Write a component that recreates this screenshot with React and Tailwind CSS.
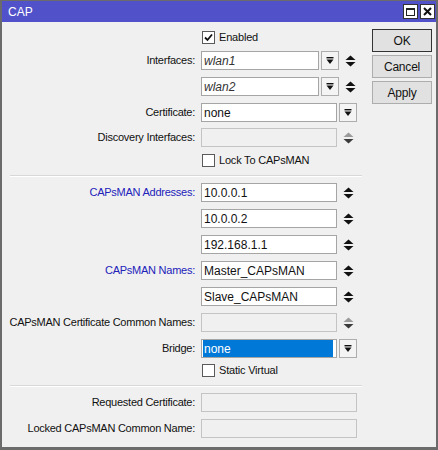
import React from "react";

const font = { fontFamily: '"Liberation Sans", Arial, sans-serif' };

const DropBtn = () => (
  <div className="w-[18px] h-[19px] ml-[2px] border border-[#adadad] bg-[#f4f4f4] flex items-center justify-center">
    <svg width="8" height="8" viewBox="0 0 8 8">
      <rect x="0.5" y="0" width="7" height="1.4" fill="#111" />
      <path d="M0.5 2.5 L7.5 2.5 L4 7 Z" fill="#111" />
    </svg>
  </div>
);

const Arrows = ({ disabled }) => (
  <div className="w-[12px] ml-[5px] flex items-center justify-center">
    <svg width="11" height="12" viewBox="0 0 11 12">
      <path d="M0.5 5 L5.5 0.5 L10.5 5 Z" fill={disabled ? "#9a9a9a" : "#111"} />
      <path d="M0.5 7 L5.5 11.5 L10.5 7 Z" fill={disabled ? "#3a3a3a" : "#111"} />
    </svg>
  </div>
);

const Input = ({ value, w, italic, disabled, selected }) => (
  <div
    className={`h-[19px] border flex items-center px-[2px] text-[12px] ${
      disabled ? "bg-[#f0f0f0] border-[#c4c4c4]" : "bg-white border-[#a5a5a5]"
    } ${italic ? "italic text-[#333]" : "text-[#111]"}`}
    style={{ width: w }}
  >
    {selected ? (
      <span className="bg-[#0078d7] text-white w-full h-full flex items-center px-[1px] -mx-[1px]">{value}</span>
    ) : (
      value
    )}
  </div>
);

const Row = ({ label, blue, mt, children }) => (
  <div className="flex items-center h-[19px]" style={{ marginTop: mt }}>
    <div
      className={`w-[199px] pr-[6px] text-right text-[11px] tracking-[-0.25px] whitespace-nowrap ${
        blue ? "text-[#2222bb]" : "text-[#111]"
      }`}
    >
      {label}
    </div>
    {children}
  </div>
);

const Check = ({ label, checked, mt }) => (
  <div className="flex items-center h-[14px] pl-[200px]" style={{ marginTop: mt }}>
    <div className="w-[13px] h-[13px] border border-[#5a5a5a] bg-white flex items-center justify-center">
      {checked && (
        <svg width="9" height="9" viewBox="0 0 9 9">
          <path d="M1 4.5 L3.5 7 L8 1.5" stroke="#111" strokeWidth="1.8" fill="none" />
        </svg>
      )}
    </div>
    <span className="ml-[4px] text-[11px] tracking-[-0.2px] text-[#111]">{label}</span>
  </div>
);

const Sep = ({ mt }) => (
  <div className="ml-[8px] w-[352px] h-[2px] border-t border-[#d8d8d8] border-b border-b-white" style={{ marginTop: mt }} />
);

const Btn = ({ children, focus }) => (
  <div
    className={`w-[60px] h-[23px] flex items-center justify-center text-[12px] tracking-[-0.2px] text-[#111] bg-[#e1e1e1] border ${
      focus ? "border-[#333]" : "border-[#adadad]"
    }`}
  >
    {children}
  </div>
);

export default function App() {
  return (
    <div
      className="w-[438px] h-[450px] bg-[#f0f0f0] border-2 border-t border-[#6b6b6b] border-b-[3px] flex flex-col overflow-hidden"
      style={font}
    >
      <div className="h-[21px] bg-[#5151c9] flex items-center justify-between pl-[6px] pr-[1px] shrink-0">
        <span className="text-white text-[12px]">CAP</span>
        <div className="flex gap-[2px]">
          <div className="w-[15px] h-[15px] bg-white border border-[#333] flex items-center justify-center">
            <div className="w-[9px] h-[8px] border border-[#222] border-t-2" />
          </div>
          <div className="w-[15px] h-[15px] bg-white border border-[#333] flex items-center justify-center">
            <svg width="9" height="9" viewBox="0 0 9 9">
              <path d="M1 1 L8 8 M8 1 L1 8" stroke="#111" strokeWidth="2" />
            </svg>
          </div>
        </div>
      </div>
      <div className="flex flex-1">
        <div className="w-[362px] flex flex-col">
          <Check label="Enabled" checked mt={8} />
          <Row label="Interfaces:" mt={7}>
            <Input value="wlan1" w={118} italic />
            <DropBtn />
            <Arrows />
          </Row>
          <Row label="" mt={7}>
            <Input value="wlan2" w={118} italic />
            <DropBtn />
            <Arrows />
          </Row>
          <Row label="Certificate:" mt={7}>
            <Input value="none" w={136} />
            <DropBtn />
          </Row>
          <Row label="Discovery Interfaces:" mt={6}>
            <Input value="" w={136} disabled />
            <Arrows disabled />
          </Row>
          <Check label="Lock To CAPsMAN" mt={6} />
          <Sep mt={8} />
          <Row label="CAPsMAN Addresses:" blue mt={6}>
            <Input value="10.0.0.1" w={136} />
            <Arrows />
          </Row>
          <Row label="" mt={7}>
            <Input value="10.0.0.2" w={136} />
            <Arrows />
          </Row>
          <Row label="" mt={7}>
            <Input value="192.168.1.1" w={136} />
            <Arrows />
          </Row>
          <Row label="CAPsMAN Names:" blue mt={7}>
            <Input value="Master_CAPsMAN" w={136} />
            <Arrows />
          </Row>
          <Row label="" mt={7}>
            <Input value="Slave_CAPsMAN" w={136} />
            <Arrows />
          </Row>
          <Row label="CAPsMAN Certificate Common Names:" mt={7}>
            <Input value="" w={136} disabled />
            <Arrows disabled />
          </Row>
          <Row label="Bridge:" mt={7}>
            <Input value="none" w={136} selected />
            <DropBtn />
          </Row>
          <Check label="Static Virtual" mt={5} />
          <Sep mt={8} />
          <Row label="Requested Certificate:" mt={6}>
            <Input value="" w={156} disabled />
          </Row>
          <Row label="Locked CAPsMAN Common Name:" mt={7}>
            <Input value="" w={156} disabled />
          </Row>
        </div>
        <div className="flex flex-col gap-[3px] pl-[8px] pt-[7px]">
          <Btn focus>OK</Btn>
          <Btn>Cancel</Btn>
          <Btn>Apply</Btn>
        </div>
      </div>
    </div>
  );
}
